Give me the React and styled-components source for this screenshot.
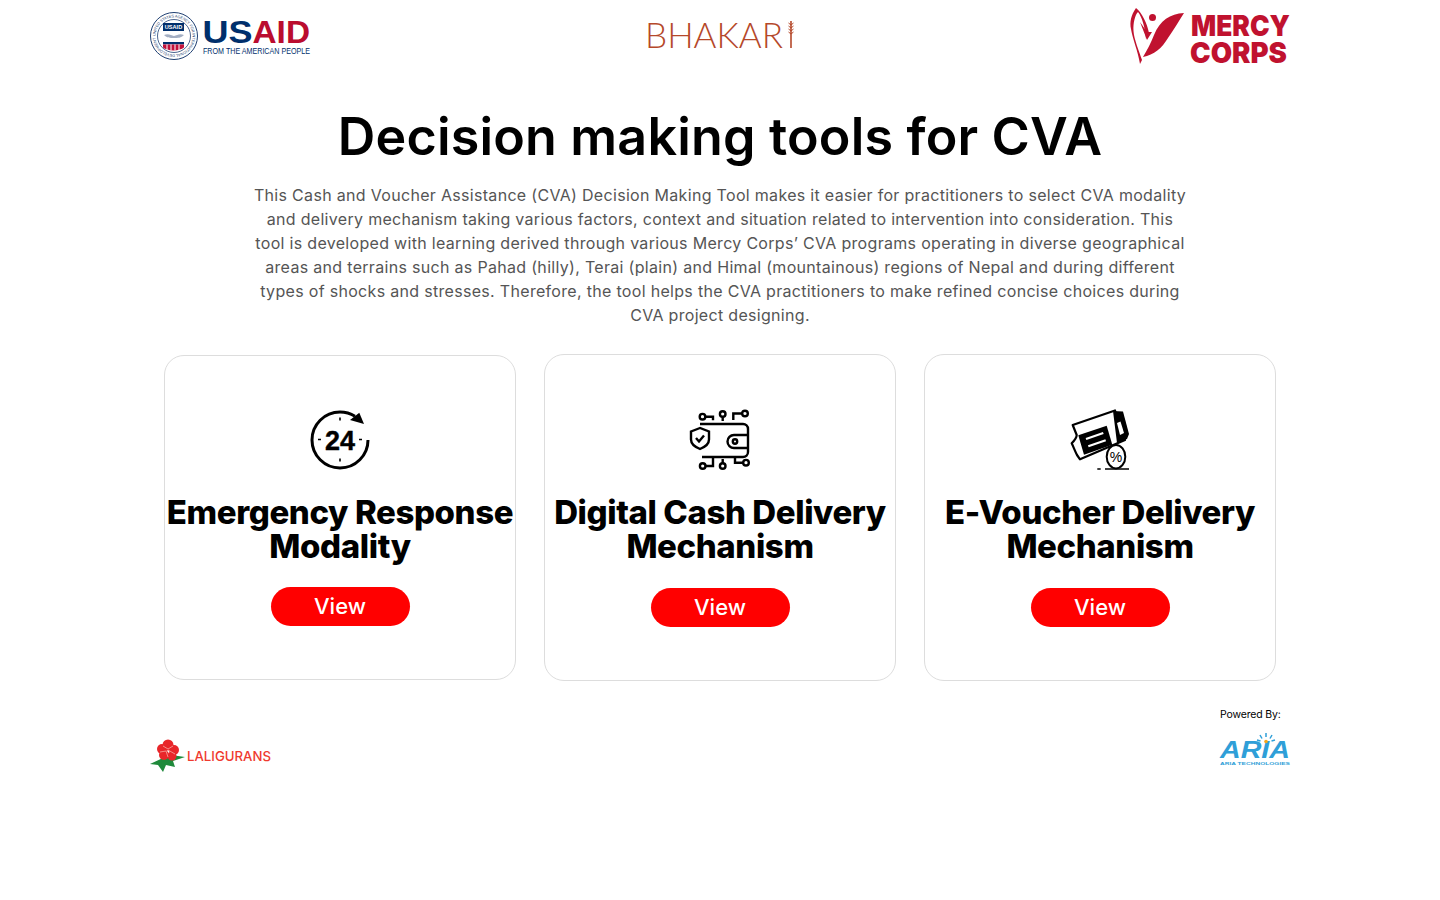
import React from 'react'
import styled, { createGlobalStyle } from 'styled-components'

const GlobalStyle = createGlobalStyle`
  html, body { margin: 0; padding: 0; background: #fff; }
  body { font-family: Inter, "Noto Sans", sans-serif; color: #000; }
  svg { overflow: visible; }
`

const Page = styled.div`
  width: 1140px;
  margin: 0 auto;
  height: 900px;
`

const TopBar = styled.header`
  display: flex;
  justify-content: space-between;
  align-items: center;
  height: 72px;
`

const Intro = styled.section`
  text-align: center;
  padding-top: 33px;
`

const Title = styled.h1`
  margin: 0;
  font-size: 52px;
  line-height: 64px;
  font-weight: 600;
  letter-spacing: 0.18px;
`

const Lead = styled.p`
  margin: 14px 0 0;
  font-size: 16px;
  line-height: 24px;
  color: #555;
  white-space: nowrap;
  letter-spacing: 0.31px;
`

const Cards = styled.section`
  display: grid;
  grid-template-columns: repeat(3, 352px);
  justify-content: center;
  column-gap: 28px;
  align-items: center;
  margin-top: 27px;
  height: 327px;
`

const Card = styled.article`
  box-sizing: border-box;
  height: ${p => (p.$short ? '325px' : '327px')};
  border: 1px solid #ddd;
  border-radius: 20px;
  display: flex;
  flex-direction: column;
  align-items: center;
  padding-top: ${p => (p.$short ? '54px' : '55px')};
`

const IconBox = styled.div`
  width: 60px;
  height: 60px;
  color: #000;
  svg { display: block; width: 60px; height: 60px; }
`

const CardTitle = styled.h2`
  margin: 25px 0 0;
  font-size: 33px;
  line-height: 34px;
  font-weight: 800;
  text-align: center;
  white-space: nowrap;
  letter-spacing: -0.4px;
`

const ViewButton = styled.button`
  margin-top: ${p => (p.$short ? '24px' : '25px')};
  width: 139px;
  height: 39px;
  border: 0;
  border-radius: 20px;
  background: #ff0000;
  color: #fff;
  font: 500 22px/39px Inter, "Noto Sans", sans-serif;
  padding: 0;
`

const Footer = styled.footer`
  display: flex;
  justify-content: space-between;
  align-items: flex-start;
  margin-top: 25px;
`

const LeftFoot = styled.div`
  padding-top: 33px;
`

const RightFoot = styled.div`
  width: 70px;
  padding-top: 1px;
`

const PoweredLabel = styled.div`
  margin: 0 0 10px;
  font-size: 10.500px;
  line-height: 16px;
  letter-spacing: -0.15px;
  white-space: nowrap;
`

const UsaidLogo = () => (
  <svg width="160" height="50" viewBox="0 0 160 50">
    <defs>
      <path id="seal-ring" d="M5.500 25a18.500 18.500 0 1 1 37 0a18.500 18.500 0 1 1-37 0" />
    </defs>
    <circle cx="24" cy="25" r="23.500" fill="#fff" stroke="#1f3f72" strokeWidth="1" />
    <circle cx="24" cy="25" r="16.500" fill="#fff" stroke="#1f3f72" strokeWidth="0.800" />
    <text fontSize="3.800" fill="#1f3f72" fontFamily="Liberation Sans, sans-serif">
      <textPath href="#seal-ring" textLength="114">UNITED STATES AGENCY FOR INTERNATIONAL DEVELOPMENT</textPath>
    </text>
    <rect x="13" y="12" width="21" height="8" fill="#002f6c" />
    <text x="23.500" y="18" textAnchor="middle" fontSize="5.600" fontWeight="700" fill="#fff" fontFamily="Liberation Sans, sans-serif">USAID</text>
    <path d="M14 24c4-2 7 0 10 1 3-1 6-3 10-1-3 3-6 3-10 3s-7 0-10-3z" fill="#a3aec2" />
    <rect x="13" y="31" width="21" height="2.400" fill="#002f6c" />
    <path d="M13 33.400h21v3c-2 1.600-6 3-10.500 3s-8.500-1.400-10.500-3z" fill="#c2113a" />
    <path d="M17 33.400v5.600M21 33.400v6M25 33.400v6M29 33.400v5.800" stroke="#fff" strokeWidth="1" />
    <text x="52.500" y="32" fontSize="32" fontWeight="700" fill="#002f6c" fontFamily="Liberation Sans, sans-serif" textLength="50" lengthAdjust="spacingAndGlyphs">US</text>
    <text x="102.500" y="32" fontSize="32" fontWeight="700" fill="#ba0c2f" fontFamily="Liberation Sans, sans-serif" textLength="57.500" lengthAdjust="spacingAndGlyphs">AID</text>
    <text x="53" y="43" fontSize="8.300" fill="#002f6c" fontFamily="Liberation Sans, sans-serif" textLength="107" lengthAdjust="spacingAndGlyphs">FROM THE AMERICAN PEOPLE</text>
  </svg>
)

const BhakariLogo = () => (
  <svg width="150" height="32" viewBox="0 0 150 32">
    <text x="0" y="28" fontSize="36" fontWeight="300" fill="#b5482a" fontFamily="Lato, sans-serif" textLength="138" lengthAdjust="spacingAndGlyphs">BHAKAR</text>
    <path d="M146 1v27" stroke="#b5482a" strokeWidth="1.600" />
    <path d="M143.500 3l2.500 2 2.500-2M143.500 6l2.500 2 2.500-2M143.500 9l2.500 2 2.500-2M143.500 12l2.500 2 2.500-2" stroke="#b5482a" strokeWidth="1" fill="none" />
  </svg>
)

const MercyLogo = () => (
  <svg width="160" height="58" viewBox="0 0 160 58">
    <g fill="#c0122f">
      <path d="M6 1C1 8-.5 15 1 22c1.500 10 7 22 9 35l2-4C9 44 4 32 3.500 24 3 16 5 8 8 5c4 5 7 15 8 27l3-6C17 16 12 6 6 1z" />
      <path d="M54 6C40 7 30 13 24 28c-3 8-7 15-11 22 11-2 19-9 25-19 6-9 11-17 16-25z" />
      <path d="M10 15l7 18 5-8-5 0z" />
      <circle cx="22.500" cy="10.500" r="3.500" />
    </g>
    <text x="61" y="29" fontSize="29" fontWeight="900" fill="#c0122f" fontFamily="Inter, sans-serif" textLength="99" lengthAdjust="spacingAndGlyphs">MERCY</text>
    <text x="60" y="56" fontSize="29" fontWeight="900" fill="#c0122f" fontFamily="Inter, sans-serif" textLength="97" lengthAdjust="spacingAndGlyphs">CORPS</text>
  </svg>
)

const ClockIcon = () => (
  <svg viewBox="0 0 60 60">
    <path d="M58 30C58 45.500 45.500 58 30 58 14.500 58 2 45.500 2 30 2 14.500 14.500 2 30 2c5.500 0 10.500 1.500 15 4.200" fill="none" stroke="#000" strokeWidth="3" />
    <path d="M40 10L49.300 2.700 54 14z" fill="#000" />
    <path d="M30 7.500v3M30 48.500v3M8 29.500h3M49 29.500h3" stroke="#000" strokeWidth="1.600" />
    <text x="30" y="40" textAnchor="middle" fontSize="27" fontWeight="700" fill="#000" stroke="#000" strokeWidth="0.400" fontFamily="Liberation Sans, sans-serif">24</text>
  </svg>
)

const WalletIcon = () => (
  <svg viewBox="0 0 60 60" fill="none" stroke="#000" strokeWidth="2.400">
    <path d="M10 14h43a5 5 0 0 1 5 5v23a5 5 0 0 1-5 5H12" />
    <path d="M58 25H44a6.500 6.500 0 0 0 0 13h14" />
    <circle cx="45" cy="31.500" r="2.200" />
    <path d="M10 18L1 21.500v8c0 4 4 7.500 9 9.500 5-2 9-5.500 9-9.500v-8z" fill="#fff" />
    <path d="M6 28l3 3.500 5-6" />
    <circle cx="12.500" cy="6.700" r="2.800" />
    <path d="M15.500 6.700H23v3.500" />
    <circle cx="32.700" cy="4" r="2.800" />
    <path d="M32.700 7v4" />
    <circle cx="55" cy="3.500" r="2.800" />
    <path d="M52 3.500h-8.700V10" />
    <circle cx="12.700" cy="56" r="2.800" />
    <path d="M15.700 56H23v-8" />
    <circle cx="32.700" cy="56" r="2.800" />
    <path d="M32.700 53v-4" />
    <circle cx="56" cy="52.700" r="2.800" />
    <path d="M53 52.700h-8V47" />
  </svg>
)

const VoucherIcon = () => (
  <svg viewBox="0 0 60 60">
    <path d="M2.700 15L45 .5 55 30 10 49.300 7 45c-2-4-3.500-8-5.300-11.700 2.500-2.500 5-5 5-8.300z" fill="#fff" stroke="#000" strokeWidth="2.200" strokeLinejoin="round" />
    <path d="M43 1L53 1.500 59 24l-2 5-10 4z" fill="#000" />
    <path d="M47 13l3.500-1.500L54 23l-4 2z" fill="#fff" />
    <path d="M8.300 25.300L36.700 15.700 42.300 34.700 14 44.700z" fill="#000" />
    <path d="M16 29L33.300 23M18.300 36.300L35.700 30.300" stroke="#fff" strokeWidth="2.200" />
    <ellipse cx="46" cy="46.700" rx="9.300" ry="11.700" fill="#fff" stroke="#000" strokeWidth="2" />
    <text x="46" y="52" textAnchor="middle" fontSize="14" fontWeight="400" fill="#000" fontFamily="Liberation Sans, sans-serif">%</text>
    <path d="M27.300 59h3.400M35 59h24" stroke="#000" strokeWidth="1.600" />
  </svg>
)

const LaligLogo = () => (
  <svg width="122" height="34" viewBox="0 0 122 34" style={{ display: 'block' }}>
    <path d="M15 18L0 25l8 1 5 7 3-7 9 2-2-6 12-4-14-2z" fill="#1f8a3b" />
    <g fill="#e8262a">
      <circle cx="12" cy="10" r="5" />
      <circle cx="18" cy="6" r="5.500" />
      <circle cx="24" cy="11" r="5" />
      <circle cx="14" cy="16" r="5" />
      <circle cx="22" cy="17" r="4.500" />
    </g>
    <path d="M13 7l5 3 5-3M10 13l6-1 2 6M18 11l7 4" stroke="#f7a7a0" strokeWidth="0.800" fill="none" />
    <text x="37" y="22" fontSize="13.500" fontWeight="500" fill="#ef3a2f" fontFamily="Inter, sans-serif" textLength="84" lengthAdjust="spacingAndGlyphs">LALIGURANS</text>
  </svg>
)

const AriaLogo = () => (
  <svg width="70" height="35" viewBox="0 0 70 35" style={{ display: 'block' }}>
    <text x="0" y="25" fontSize="24" fontWeight="700" fill="#2f9fd8" fontFamily="Liberation Sans, sans-serif" fontStyle="italic" textLength="70" lengthAdjust="spacingAndGlyphs">ARIA</text>
    <circle cx="46" cy="8.500" r="1.800" fill="#f4a81d" />
    <path d="M46 0v4M40 2l2 3.500M52 2l-2 3.500M37 7l3.500 1M55 7l-3.500 1" stroke="#2f9fd8" strokeWidth="1.500" />
    <text x="0" y="32" fontSize="4.400" fontWeight="700" fill="#2f9fd8" fontFamily="Liberation Sans, sans-serif" textLength="70" lengthAdjust="spacingAndGlyphs">ARIA TECHNOLOGIES</text>
  </svg>
)

const cards = [
  { id: 'emergency', icon: <ClockIcon />, title: ['Emergency Response', 'Modality'], short: true },
  { id: 'digital', icon: <WalletIcon />, title: ['Digital Cash Delivery', 'Mechanism'] },
  { id: 'voucher', icon: <VoucherIcon />, title: ['E-Voucher Delivery', 'Mechanism'] },
]

export default function App() {
  return (
    <Page>
      <GlobalStyle />
      <TopBar>
        <UsaidLogo />
        <BhakariLogo />
        <MercyLogo />
      </TopBar>
      <Intro>
        <Title>Decision making tools for CVA</Title>
        <Lead>
          This Cash and Voucher Assistance (CVA) Decision Making Tool makes it easier for practitioners to select CVA modality<br />
          and delivery mechanism taking various factors, context and situation related to intervention into consideration. This<br />
          tool is developed with learning derived through various Mercy Corps’ CVA programs operating in diverse geographical<br />
          areas and terrains such as Pahad (hilly), Terai (plain) and Himal (mountainous) regions of Nepal and during different<br />
          types of shocks and stresses. Therefore, the tool helps the CVA practitioners to make refined concise choices during<br />
          CVA project designing.
        </Lead>
      </Intro>
      <Cards>
        {cards.map(c => (
          <Card key={c.id} $short={c.short}>
            <IconBox>{c.icon}</IconBox>
            <CardTitle>{c.title[0]}<br />{c.title[1]}</CardTitle>
            <ViewButton $short={c.short}>View</ViewButton>
          </Card>
        ))}
      </Cards>
      <Footer>
        <LeftFoot><LaligLogo /></LeftFoot>
        <RightFoot>
          <PoweredLabel>Powered By:</PoweredLabel>
          <AriaLogo />
        </RightFoot>
      </Footer>
    </Page>
  )
}
